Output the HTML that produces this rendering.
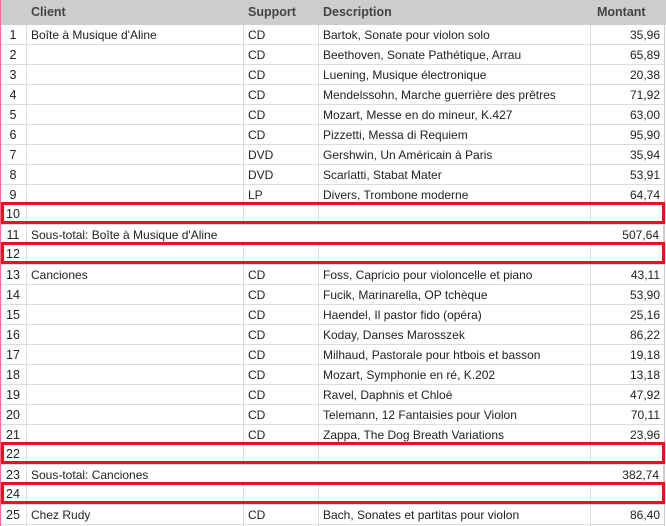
<!DOCTYPE html>
<html><head><meta charset="utf-8"><style>
body{margin:0;width:666px;height:526px;overflow:hidden;background:#fff;font-family:"Liberation Sans",Arial,sans-serif;font-size:12px;color:#222;position:relative}
.hdr{position:absolute;left:0;top:0;width:666px;height:25px;background:#cdcdcd}
.hdr span{position:absolute;top:5px;color:#444;font-weight:bold;font-size:12.5px}
.row{position:absolute;left:0;width:664px;height:20px;border-bottom:1px solid #dcdcdc;box-sizing:border-box}
.row span{position:absolute;top:3px;white-space:nowrap}
.sub{background:#fff;border-right:1px solid #cfcfcf}
.sub:before{content:"";position:absolute;left:26px;top:0;width:1px;height:20px;background:#dcdcdc}
.n{left:0;width:26px;text-align:center;font-size:12.5px}
.c{left:31px}.s{left:248px}.d{left:323px}.m{right:4px;text-align:right}
.vl{position:absolute;top:25px;height:501px;width:1px;background:#dcdcdc}
.box{position:absolute;left:1px;width:664px;height:22px;border:3px solid #e8131f;box-sizing:border-box}
.pink{position:absolute;left:0;top:0;width:1px;height:526px;background:#ff6a8f}
</style></head><body>
<div class="hdr"><span style="left:31px">Client</span><span style="left:248px">Support</span><span style="left:323px">Description</span><span style="left:597px">Montant</span></div>
<div class="vl" style="left:26px"></div><div class="vl" style="left:243px"></div><div class="vl" style="left:318px"></div><div class="vl" style="left:590px"></div><div class="vl" style="left:664px;background:#cfcfcf"></div>
<div class="row" style="top:25px"><span class="n">1</span><span class="c">Boîte à Musique d'Aline</span><span class="s">CD</span><span class="d">Bartok, Sonate pour violon solo</span><span class="m">35,96</span></div>
<div class="row" style="top:45px"><span class="n">2</span><span class="s">CD</span><span class="d">Beethoven, Sonate Pathétique, Arrau</span><span class="m">65,89</span></div>
<div class="row" style="top:65px"><span class="n">3</span><span class="s">CD</span><span class="d">Luening, Musique électronique</span><span class="m">20,38</span></div>
<div class="row" style="top:85px"><span class="n">4</span><span class="s">CD</span><span class="d">Mendelssohn, Marche guerrière des prêtres</span><span class="m">71,92</span></div>
<div class="row" style="top:105px"><span class="n">5</span><span class="s">CD</span><span class="d">Mozart, Messe en do mineur, K.427</span><span class="m">63,00</span></div>
<div class="row" style="top:125px"><span class="n">6</span><span class="s">CD</span><span class="d">Pizzetti, Messa di Requiem</span><span class="m">95,90</span></div>
<div class="row" style="top:145px"><span class="n">7</span><span class="s">DVD</span><span class="d">Gershwin, Un Américain à Paris</span><span class="m">35,94</span></div>
<div class="row" style="top:165px"><span class="n">8</span><span class="s">DVD</span><span class="d">Scarlatti, Stabat Mater</span><span class="m">53,91</span></div>
<div class="row" style="top:185px"><span class="n">9</span><span class="s">LP</span><span class="d">Divers, Trombone moderne</span><span class="m">64,74</span></div>
<div class="row" style="top:205px"><span class="n" style="top:2px">10</span></div>
<div class="row sub" style="top:225px"><span class="n">11</span><span class="c">Sous-total: Boîte à Musique d'Aline</span><span class="m">507,64</span></div>
<div class="row" style="top:245px"><span class="n" style="top:2px">12</span></div>
<div class="row" style="top:265px"><span class="n">13</span><span class="c">Canciones</span><span class="s">CD</span><span class="d">Foss, Capricio pour violoncelle et piano</span><span class="m">43,11</span></div>
<div class="row" style="top:285px"><span class="n">14</span><span class="s">CD</span><span class="d">Fucik, Marinarella, OP tchèque</span><span class="m">53,90</span></div>
<div class="row" style="top:305px"><span class="n">15</span><span class="s">CD</span><span class="d">Haendel, Il pastor fido (opéra)</span><span class="m">25,16</span></div>
<div class="row" style="top:325px"><span class="n">16</span><span class="s">CD</span><span class="d">Koday, Danses Marosszek</span><span class="m">86,22</span></div>
<div class="row" style="top:345px"><span class="n">17</span><span class="s">CD</span><span class="d">Milhaud, Pastorale pour htbois et basson</span><span class="m">19,18</span></div>
<div class="row" style="top:365px"><span class="n">18</span><span class="s">CD</span><span class="d">Mozart, Symphonie en ré, K.202</span><span class="m">13,18</span></div>
<div class="row" style="top:385px"><span class="n">19</span><span class="s">CD</span><span class="d">Ravel, Daphnis et Chloé</span><span class="m">47,92</span></div>
<div class="row" style="top:405px"><span class="n">20</span><span class="s">CD</span><span class="d">Telemann, 12 Fantaisies pour Violon</span><span class="m">70,11</span></div>
<div class="row" style="top:425px"><span class="n">21</span><span class="s">CD</span><span class="d">Zappa, The Dog Breath Variations</span><span class="m">23,96</span></div>
<div class="row" style="top:445px"><span class="n" style="top:2px">22</span></div>
<div class="row sub" style="top:465px"><span class="n">23</span><span class="c">Sous-total: Canciones</span><span class="m">382,74</span></div>
<div class="row" style="top:485px"><span class="n" style="top:2px">24</span></div>
<div class="row" style="top:505px"><span class="n">25</span><span class="c">Chez Rudy</span><span class="s">CD</span><span class="d">Bach, Sonates et partitas pour violon</span><span class="m">86,40</span></div>
<div class="box" style="top:202px"></div>
<div class="box" style="top:242px"></div>
<div class="box" style="top:442px"></div>
<div class="box" style="top:482px"></div>
<div class="pink"></div>
</body></html>
